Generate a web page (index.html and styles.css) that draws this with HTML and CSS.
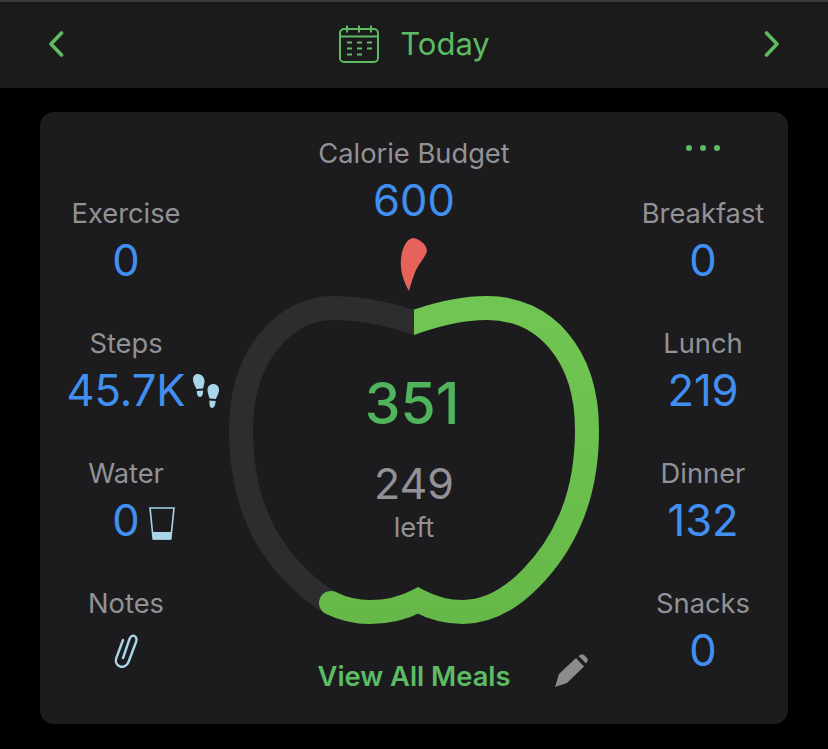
FILE: index.html
```html
<!DOCTYPE html>
<html lang="en">
<head>
  <meta charset="UTF-8" />
  <title>Today</title>
  <link rel="stylesheet" href="styles.css">
</head>
<body>

  <header class="topbar">
    <svg class="chevron" viewBox="0 0 16 26"><path d="M13.5 2 L3 13 L13.5 24" /></svg>
    <div class="date">
      <svg class="calendar" viewBox="0 0 42 38">
        <rect x="2" y="4" width="38" height="33" rx="4" />
        <path d="M2 11.5 H40 M9 0.5 V7.5 M21 0.5 V7.5 M33 0.5 V7.5" />
        <path class="dash" d="M9 17.5 H14 M19 17.5 H24 M29 17.5 H34 M9 23.5 H14 M19 23.5 H24 M29 23.5 H34 M9 29.5 H14 M19 29.5 H24" />
      </svg>
      <span>Today</span>
    </div>
    <svg class="chevron" viewBox="0 0 16 26"><path d="M2.5 2 L13 13 L2.5 24" /></svg>
  </header>

  <main class="page">
    <section class="card">

      <div class="side side-left">
        <div class="stat">
          <div class="stat-label">Exercise</div>
          <div class="stat-value"><span>0</span></div>
        </div>
        <div class="stat">
          <div class="stat-label">Steps</div>
          <div class="stat-value">
            <span>45.7K
              <svg class="stat-icon steps" viewBox="0 0 28 36">
                <path d="M6 1 C10 1 13 5 12.5 9 C12 12 11.5 14 11 15.5 L4.5 16 C3 13 1 9.5 1 6.5 C1 3 3 1 6 1 Z" />
                <path d="M4.8 18 L11 17.6 C11.3 20.5 10.5 24 8 24 C5.5 24 4.8 21 4.8 18 Z" />
                <path d="M21.5 11 C25 11 27.5 14 27 18 C26.5 21 24.5 24 24 26 L17.5 25.5 C17 23 15.5 20 15.5 17 C15.5 13.5 18 11 21.5 11 Z" />
                <path d="M17.5 27.5 L23.7 28 C23.5 31 22.5 35 20 35 C17.5 35 17.2 30.5 17.5 27.5 Z" />
              </svg>
            </span>
          </div>
        </div>
        <div class="stat">
          <div class="stat-label">Water</div>
          <div class="stat-value">
            <span>0
              <svg class="stat-icon glass" viewBox="0 0 26 33">
                <path class="glass-fill" d="M3.3 25 H22.7 L21.8 32.5 H4.2 Z" />
                <path class="glass-line" d="M1 1 H25 L21.8 32 H4.2 Z" />
              </svg>
            </span>
          </div>
        </div>
        <div class="stat">
          <div class="stat-label">Notes</div>
          <div class="stat-value">
            <svg class="clip" viewBox="0 0 24 36">
              <path d="M9 26 L15.5 7 C16.5 4 19 3 20.5 4 C22.5 5 23 7 22 10 L14.5 30 C13 34 9 35.5 6 34.5 C2.5 33 1 29.5 2.5 25.5 L9 8" />
            </svg>
          </div>
        </div>
      </div>

      <div class="middle">
        <div class="stat-label">Calorie Budget</div>
        <div class="stat-value">600</div>

        <div class="apple">
          <svg class="apple-ring" viewBox="212 232 406 400">
            <defs>
              <linearGradient id="ringGreen" x1="0" y1="0" x2="0" y2="1">
                <stop offset="0" stop-color="#71c653" />
                <stop offset="1" stop-color="#66b948" />
              </linearGradient>
              <clipPath id="leftHalf"><rect x="212" y="232" width="202" height="400" /></clipPath>
              <clipPath id="greenPart"><path d="M414 232 H618 V632 H212 V520 H414 Z" /></clipPath>
            </defs>
            <path class="stem" d="M409 291 C403 280 400 270 401 259 C402 247 407 239 413 238 C420 239 427 245 427 251 C426 256 420 262 416 270 C413 277 411 284 409 291 Z" />
            <path class="ring-track" clip-path="url(#leftHalf)" d="M331 603 C300 585 272 553 258 520 C248 497 241 465 241 430 C241 355 285 308 333 308 C360 308 392 314 424 326" />
            <path class="ring-fill" clip-path="url(#greenPart)" d="M404 326 C435 314 462 308 487 308 C545 308 587 355 587 430 C587 465 580 497 570 520 C556 553 515 612 463 612 C447 612 432 608 418 600.5 C404 608 388 612 370 612 C355 612 343 609 331 603" />
          </svg>
          <div class="apple-text">
            <div class="eaten">351</div>
            <div class="remaining">249</div>
            <div class="remaining-label">left</div>
          </div>
        </div>

        <div class="meals-row">
          <a class="meals-link">View All Meals</a>
          <svg class="pencil" viewBox="0 0 34 34">
            <path d="M1 33 L5 20 L22 4 L30 12.5 L13 29 Z" />
            <path d="M24.5 2 L27 0.5 C28 0 29 0 30 1 L33 4 C34 5 34 6 33.5 7 L32 9.5 Z" />
          </svg>
        </div>
      </div>

      <div class="side side-right">
        <div class="more"><i></i><i></i><i></i></div>
        <div class="stat">
          <div class="stat-label">Breakfast</div>
          <div class="stat-value"><span>0</span></div>
        </div>
        <div class="stat">
          <div class="stat-label">Lunch</div>
          <div class="stat-value"><span>219</span></div>
        </div>
        <div class="stat">
          <div class="stat-label">Dinner</div>
          <div class="stat-value"><span>132</span></div>
        </div>
        <div class="stat">
          <div class="stat-label">Snacks</div>
          <div class="stat-value"><span>0</span></div>
        </div>
      </div>

    </section>
  </main>

</body>
</html>
```

FILE: styles.css
```css
* {
  box-sizing: border-box;
}

body {
  margin: 0;
  background: #000;
  font-family: Inter, "Liberation Sans", sans-serif;
}

.topbar {
  height: 88px;
  padding: 0 46px 3px;
  display: flex;
  align-items: center;
  justify-content: space-between;
  background: #1b1b1c;
  border-top: 2px solid #3a3a3a;
}

.chevron {
  width: 20px;
  height: 26px;
  fill: none;
  stroke: #5cbb63;
  stroke-width: 3.6;
  stroke-linecap: round;
  stroke-linejoin: round;
}

.date {
  display: flex;
  align-items: center;
  gap: 20px;
  color: #5cbb63;
  font-size: 31px;
}

.calendar {
  width: 42px;
  height: 38px;
  fill: none;
  stroke: #5cbb63;
  stroke-width: 2;
}

.page {
  padding: 24px 40px 25px;
}

.card {
  height: 612px;
  display: grid;
  grid-template-columns: 172px 1fr 170px;
  background: #1c1c1e;
  border-radius: 14px;
}

.side {
  display: flex;
  flex-direction: column;
  gap: 34px;
}

.side-left {
  padding-top: 84px;
}

.more {
  height: 50px;
  padding-top: 33px;
  display: flex;
  justify-content: center;
  gap: 8px;
}

.more i {
  width: 6px;
  height: 6px;
  border-radius: 50%;
  background: #5cbb63;
}

.stat {
  height: 96px;
  text-align: center;
}

.stat-label {
  height: 34px;
  padding-top: 1px;
  line-height: 34px;
  font-size: 27.3px;
  color: #929296;
  text-align: center;
}

.stat-value {
  height: 62px;
  line-height: 60px;
  font-size: 43.5px;
  color: #418ff0;
  text-align: center;
}

.stat-value span {
  position: relative;
  display: inline-block;
}

.stat-icon {
  position: absolute;
  top: 50%;
}

.steps {
  left: calc(100% + 6px);
  width: 28px;
  height: 36px;
  margin-top: -17px;
  fill: #a9d5e9;
}

.glass {
  left: calc(100% + 9px);
  width: 26px;
  height: 33px;
  margin-top: -13px;
}

.glass-fill {
  fill: #a9d5e9;
}

.glass-line {
  fill: none;
  stroke: #a9d5e9;
  stroke-width: 1.6;
}

.clip {
  width: 24px;
  height: 36px;
  margin-top: 12px;
  display: inline-block;
  fill: none;
  stroke: #a9d5e9;
  stroke-width: 2.4;
  stroke-linecap: round;
}

.middle {
  padding-top: 24px;
}

.middle > .stat-label,
.middle > .stat-value {
  padding-right: 2px;
}

.apple {
  position: relative;
  height: 400px;
}

.apple-ring {
  display: block;
  width: 406px;
  height: 400px;
}

.stem {
  fill: #e5635a;
}

.ring-track,
.ring-fill {
  fill: none;
  stroke-width: 24;
  stroke-linecap: round;
  stroke-linejoin: miter;
  stroke-miterlimit: 10;
}

.ring-track {
  stroke: #2d2d2f;
}

.ring-fill {
  stroke: url(#ringGreen);
}

.apple-text {
  position: absolute;
  top: 137px;
  left: 0;
  right: 2px;
  text-align: center;
}

.eaten {
  padding-right: 4px;
  line-height: 70px;
  font-size: 57px;
  font-weight: 500;
  color: #4fb45c;
}

.remaining {
  margin-top: 14px;
  line-height: 60px;
  font-size: 43px;
  color: #919196;
}

.remaining-label {
  margin-top: -2px;
  line-height: 34px;
  font-size: 27.3px;
  color: #919196;
}

.meals-row {
  position: relative;
  margin-top: 28px;
  padding-right: 2px;
  text-align: center;
}

.meals-link {
  line-height: 34px;
  font-size: 27.3px;
  font-weight: 600;
  color: #5cbb63;
}

.pencil {
  position: absolute;
  left: 342px;
  top: -6px;
  width: 34px;
  height: 34px;
  fill: #8c8c8e;
}
```
